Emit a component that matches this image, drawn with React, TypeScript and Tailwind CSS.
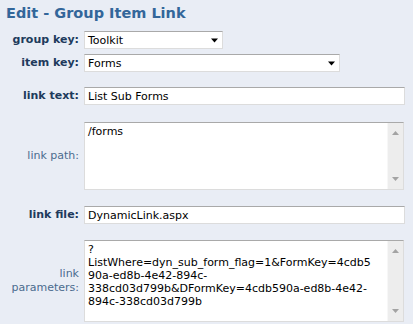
import React from 'react'

const font = { fontFamily: '"DejaVu Sans", Verdana, sans-serif' }

const Arrow = () => (
    <svg width="7" height="5" viewBox="0 0 7 5" className="shrink-0">
        <path d="M0 0.5H7L3.5 4.5Z" fill="#000" />
    </svg>
)

const ScrollArrow = ({ down }: { down?: boolean }) => (
    <svg width="7" height="4" viewBox="0 0 7 4">
        {down ? <path d="M0 0H7L3.5 4Z" fill="#a3a3a3" /> : <path d="M0 4H7L3.5 0Z" fill="#a3a3a3" />}
    </svg>
)

const Select = ({ value, width }: { value: string; width: string }) => (
    <div className={`${width} h-[18px] bg-white border border-[#dcdcdc] border-t-[#a9a9a9] flex items-center justify-between pl-[3px] pr-[4px]`}>
        <span className="text-[11px] leading-none text-black">{value}</span>
        <Arrow />
    </div>
)

const Input = ({ value }: { value: string }) => (
    <div className="w-[321px] h-[18px] bg-white border border-[#dcdcdc] border-t-[#a9a9a9] flex items-center pl-[3px]">
        <span className="text-[11px] leading-none text-black">{value}</span>
    </div>
)

const TextArea = ({ height, children }: { height: string; children: React.ReactNode }) => (
    <div className={`w-[320px] ${height} bg-white border border-[#dcdcdc] border-t-[#a9a9a9] flex`}>
        <div className="flex-1 pl-[3px] pt-[2px] text-[11px] leading-[13px] text-black">{children}</div>
        <div className="w-[16px] bg-[#ededed] border-l border-[#f7f7f7] flex flex-col items-center justify-between py-[8px]">
            <ScrollArrow />
            <ScrollArrow down />
        </div>
    </div>
)

const Label = ({ children, bold }: { children: React.ReactNode; bold?: boolean }) => (
    <div className={`w-[84px] shrink-0 pr-[5px] text-right text-[11px] leading-[14px] ${bold ? 'font-bold text-[#203a5c]' : 'text-[#4b6b8e]'}`}>
        {children}
    </div>
)

const App = () => {
    return (
        <div className="w-[413px] h-[324px] bg-[#e9edf5] overflow-hidden" style={font}>
            <div className="pl-[6px] pt-[3px] text-[14.5px] leading-[20px] font-bold text-[#33669a]">Edit - Group Item Link</div>
            <div className="flex flex-col mt-[8px]">
                <div className="flex items-center">
                    <Label bold>group key:</Label>
                    <Select value="Toolkit" width="w-[139px]" />
                </div>
                <div className="flex items-center mt-[5px]">
                    <Label bold>item key:</Label>
                    <Select value="Forms" width="w-[256px]" />
                </div>
                <div className="flex items-center mt-[15px]">
                    <Label bold>link text:</Label>
                    <Input value="List Sub Forms" />
                </div>
                <div className="flex items-center mt-[17px]">
                    <Label>link path:</Label>
                    <TextArea height="h-[68px]">/forms</TextArea>
                </div>
                <div className="flex items-center mt-[16px]">
                    <Label bold>link file:</Label>
                    <Input value="DynamicLink.aspx" />
                </div>
                <div className="flex items-center mt-[16px]">
                    <Label>link parameters:</Label>
                    <TextArea height="h-[82px]">
                        ?<br />
                        ListWhere=dyn_sub_form_flag=1&amp;FormKey=4cdb5<br />
                        90a-ed8b-4e42-894c-<br />
                        338cd03d799b&amp;DFormKey=4cdb590a-ed8b-4e42-<br />
                        894c-338cd03d799b
                    </TextArea>
                </div>
            </div>
        </div>
    )
}

export default App
